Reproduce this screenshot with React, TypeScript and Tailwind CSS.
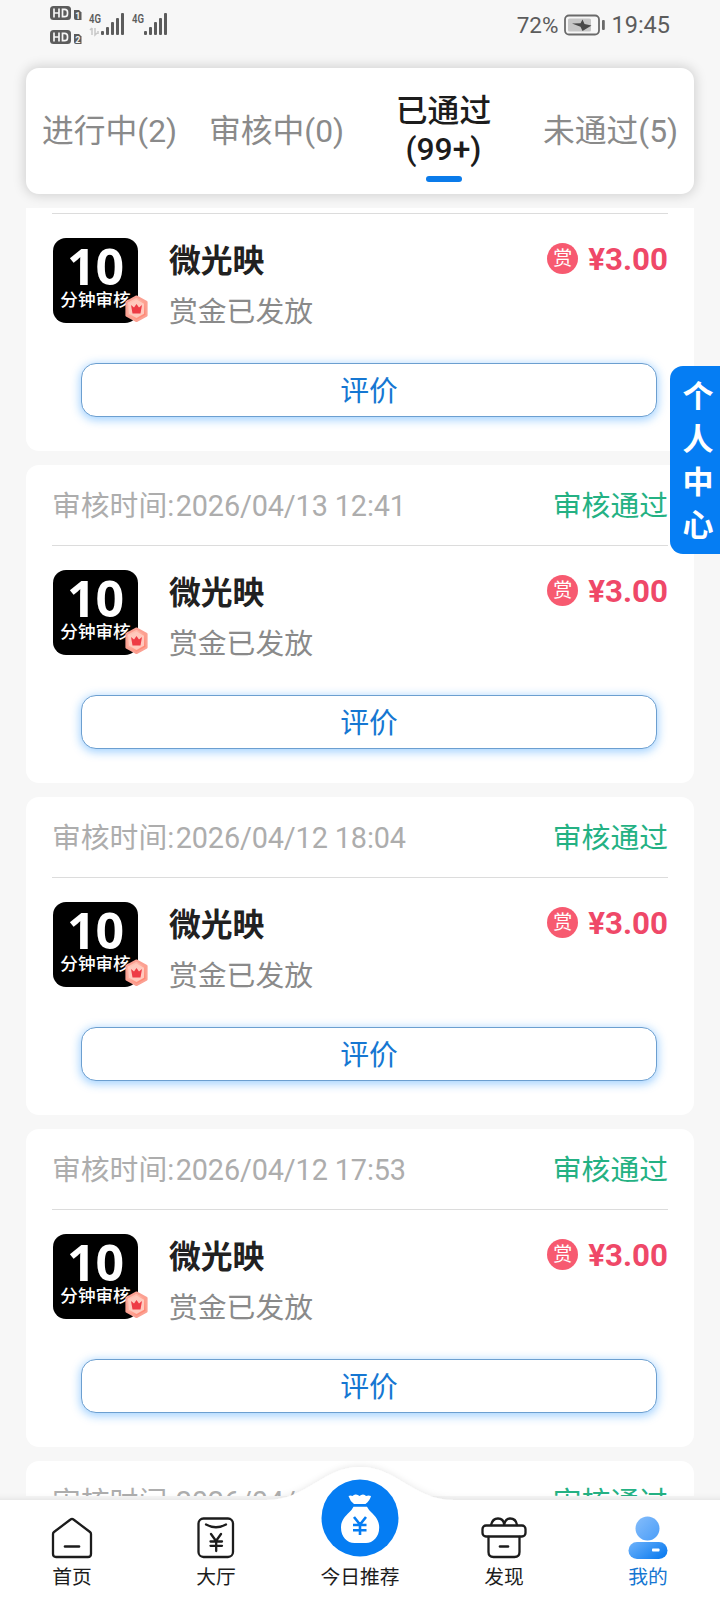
import React from "react";

const times = ["2026/04/13 12:41", "2026/04/12 18:04", "2026/04/12 17:53"];

function SignalBars({ children }: { children?: React.ReactNode }) {
  return (
    <svg className="overflow-visible" width="36" height="24" viewBox="0 0 36 24" fill="#5c5c5c">
      <text x="0" y="10" fontSize="12.500" fontWeight="600" textLength="12" lengthAdjust="spacingAndGlyphs">4G</text>
      <rect x="12" y="18" width="3" height="4" rx="1" />
      <rect x="17" y="14" width="3" height="8" rx="1" />
      <rect x="22" y="9" width="3" height="13" rx="1" />
      <rect x="27" y="5" width="3" height="17" rx="1" />
      <rect x="32" y="0" width="3" height="22" rx="1" />
      {children}
    </svg>
  );
}

function HdMark({ n }: { n: string }) {
  return (
    <svg width="32" height="14" viewBox="0 0 32 14">
      <rect x="0" y="0" width="21" height="14" rx="3.500" fill="#5c5c5c" />
      <path d="M4 2.500v9M4 7h5M9 2.500v9M12.500 3.300v7.400h2q3 0 3-2.700V6q0-2.700-3-2.700Z" fill="none" stroke="#f6f6f6" strokeWidth="1.700" />
      <path d="M24 4h5l2.500 2.500V14h-5.500q-2 0-2-2Z" fill="#5c5c5c" />
      <text x="25.200" y="12.500" fontSize="9" fontWeight="700" fill="#f6f6f6">{n}</text>
    </svg>
  );
}

function StatusBar() {
  return (
    <div className="flex h-[68px] shrink-0 items-start justify-between pl-[50px] pr-[50px] text-[#5c5c5c]">
      <div className="flex pt-1.5">
        <div className="flex flex-col gap-2.5">
          <HdMark n="1" />
          <HdMark n="2" />
        </div>
        <div className="flex gap-[7px] pl-[7px] pt-[7px]">
          <SignalBars>
            <path d="M3 15v7M3 15l-2 2M6 15v7l2-2M9 18v3" fill="none" stroke="#c8c8c8" strokeWidth="1.500" />
          </SignalBars>
          <SignalBars />
        </div>
      </div>
      <div className="flex h-[50px] items-center text-[23.500px] leading-none">
        <span className="text-[22.500px]">72%</span>
        <svg className="-mt-px ml-[6px] mr-[6px]" width="41" height="22" viewBox="0 0 41 22">
          <rect x="1" y="1.500" width="34" height="19" rx="4" fill="none" stroke="#6a6a6a" strokeWidth="1.800" />
          <rect x="4" y="4.500" width="23" height="13" rx="1.500" fill="#c6c6c6" />
          <path d="M8 9.500 16.500 9.200 18.500 5.500 20.500 10 27.500 11.500 18.500 17 16.500 12.800Z" fill="#484848" />
          <rect x="38" y="6" width="2.800" height="10" rx="1" fill="#6a6a6a" />
        </svg>
        <span className="pt-px">19:45</span>
      </div>
    </div>
  );
}

function Tabs() {
  return (
    <div className="relative z-10 mx-[26px] flex h-[126px] shrink-0 items-center rounded-[13px] bg-white text-[31.800px] leading-[38px] text-[#8a8a8a] shadow-[0_0_12px_2px_rgba(0,0,0,0.15)]">
      <div className="w-[167px] pb-px text-center">进行中(2)</div>
      <div className="w-[167px] pb-px text-center">审核中(0)</div>
      <div className="flex w-[167px] flex-col items-center pt-[12px] font-medium text-[#1c1c1c]">
        <span>已通过</span>
        <span>(99+)</span>
        <span className="mt-[8px] h-1.5 w-9 rounded-full bg-[#0a7bea]" />
      </div>
      <div className="w-[167px] pb-px text-center">未通过(5)</div>
    </div>
  );
}

function CrownBadge() {
  return (
    <svg className="absolute left-[71px] top-[56px]" width="25" height="30" viewBox="0 0 25 30">
      <defs>
        <linearGradient id="badge" x1="0" y1="0" x2="1" y2="1">
          <stop offset="0" stopColor="#ffd9cc" />
          <stop offset="1" stopColor="#ff7560" />
        </linearGradient>
      </defs>
      <path d="M12.500 2.500 22.500 8v13.500L12.500 27 2.500 21.500V8Z" fill="url(#badge)" stroke="#fba092" strokeWidth="2.200" strokeLinejoin="round" />
      <path d="M12.500 5.500 20 9.700v10L12.500 24 5 19.700v-10Z" fill="#ffc9bd" />
      <path d="M7 11l3 2.500 2.500-3.500 2.500 3.500 3-2.500-1.500 8.500h-8Z" fill="#ee3b45" />
    </svg>
  );
}

function CardHeader({ time }: { time: string }) {
  return (
    <div className="flex h-20 items-center justify-between pt-[3px] text-[28.800px] leading-none">
      <span className="text-[#adadad]">
        审核时间<span className="mr-[1.500px]">:</span>
        <span className="tracking-[-0.120px]">{time}</span>
      </span>
      <span className="text-[#24b183]">审核通过</span>
    </div>
  );
}

function CardBody() {
  return (
    <>
      <div className="h-px bg-[#dcdcdc]" />
      <div className="flex pt-6">
        <div className="relative ml-px size-[85px] rounded-[13px] bg-black text-center text-white">
          <div className="pt-[8px] font-['Open_Sans'] text-[50px] font-bold leading-[40px]">10</div>
          <div className="whitespace-nowrap pt-[3px] text-[17.600px] font-medium leading-[22px]">分钟审核</div>
          <CrownBadge />
        </div>
        <div className="flex flex-col pl-[31px]">
          <span className="pt-[5px] text-[31.800px] font-bold leading-[36px] text-[#212121]">微光映</span>
          <span className="pt-[15px] text-[28.800px] leading-[36px] text-[#8a8a8a]">赏金已发放</span>
        </div>
        <div className="ml-auto flex h-[42px] items-center gap-2.5">
          <span className="-mt-px flex size-[31px] items-center justify-center rounded-full bg-[#f75a70] text-[19px] leading-none text-white">赏</span>
          <span className="pt-[2px] text-[31.300px] font-bold leading-none text-[#ef4868]">¥3.00</span>
        </div>
      </div>
      <div className="mt-auto pb-[34px] pl-[29px] pr-[11px]">
        <button className="flex h-[54px] w-full items-center justify-center rounded-[15px] border border-[#6c9fd0] bg-white pt-[3px] text-[28.800px] leading-none text-[#1677d2] shadow-[0_2px_10px_1px_rgba(20,140,255,0.4)]">
          评价
        </button>
      </div>
    </>
  );
}

function HomeIcon() {
  return (
    <svg width="44" height="44" viewBox="0 0 44 44" fill="none" stroke="#1c1c1c" strokeWidth="2.300" strokeLinejoin="round" strokeLinecap="round">
      <path d="M20.500 3.500Q22 2.300 23.500 3.500L40 16q1 .8 1 2v20q0 3-3 3H6q-3 0-3-3V18q0-1.200 1-2Z" />
      <path d="M15 30.500h14" strokeWidth="2.600" />
    </svg>
  );
}

function HallIcon() {
  return (
    <svg width="44" height="44" viewBox="0 0 44 44" fill="none" stroke="#1c1c1c" strokeWidth="2.300" strokeLinecap="round" strokeLinejoin="round">
      <rect x="4.500" y="2.500" width="34.500" height="38.500" rx="5" />
      <path d="M12 8.500q10 5.500 20 0M17 18l5 7 5-7M16.500 25.500h11.500M16.500 29.800h11.500M22.200 25v10" />
    </svg>
  );
}

function GiftIcon() {
  return (
    <svg width="46" height="44" viewBox="0 0 46 44" fill="none" stroke="#1c1c1c" strokeWidth="2.300" strokeLinecap="round" strokeLinejoin="round">
      <rect x="1.500" y="9.500" width="43" height="11" rx="3.500" />
      <path d="M7.500 21v15q0 5 5 5h21q5 0 5-5V21" />
      <path d="M10 9q1.500-6.500 7-6.500 5.500 0 6.200 6Q24.500 2.500 29 2.500q6 0 7 6.500" />
      <path d="M19 30.500h8" strokeWidth="2.600" />
    </svg>
  );
}

function UserIcon() {
  return (
    <svg width="44" height="44" viewBox="0 0 44 44">
      <defs>
        <linearGradient id="head" x1="0" y1="0" x2="1" y2="1">
          <stop offset="0" stopColor="#85bdfb" />
          <stop offset="1" stopColor="#4a9df8" />
        </linearGradient>
        <linearGradient id="body" x1="0" y1="0" x2="1" y2="0.600">
          <stop offset="0" stopColor="#6fb3fb" />
          <stop offset="1" stopColor="#127ff0" />
        </linearGradient>
      </defs>
      <circle cx="21.500" cy="12.500" r="12" fill="url(#head)" />
      <rect x="2.500" y="26" width="39" height="17" rx="8.500" fill="url(#body)" />
      <rect x="26" y="32.500" width="7.500" height="3" rx="0.800" fill="#fff" />
    </svg>
  );
}

function BagIcon() {
  return (
    <svg className="mb-[3px]" width="78" height="78" viewBox="0 0 78 78">
      <circle cx="39" cy="39" r="38.500" fill="#057df3" />
      <path d="M27.500 17q2-1 4 0 1.500-1.800 3.500-1.500 2 .3 3.500 1.500 1.500-1.500 3.500-1.500 2 .2 3 1.500 2.500-1 5 0-1 4.500-5.500 8H33q-4-3-5.500-8Z" fill="#fff" />
      <path d="M32.500 27.800h13.500q1.500 3 4 5.200c5.500 5 8.200 9.500 8.200 15.500C58.200 58 52 64 45 64H33.500C26 64 20 58 20 48.500c0-6 3-10.500 8.500-15.500q2.500-2.200 4-5.200Z" fill="#fff" />
      <path d="M33 38l6 7.500 6-7.500M32 46h13.500M32 51.200h13.500M39 45.500V56" fill="none" stroke="#057df3" strokeWidth="2.600" />
    </svg>
  );
}

function NavItem({ label, children, active }: { label: string; children: React.ReactNode; active?: boolean }) {
  return (
    <div className={active ? "flex w-[144px] flex-col items-center justify-end text-[#1677d2]" : "flex w-[144px] flex-col items-center justify-end text-[#1c1c1c]"}>
      {children}
      <span className="mt-[5px] h-[35px] text-[19.800px] leading-[26px]">{label}</span>
    </div>
  );
}

function BottomNav() {
  return (
    <div className="relative z-10 flex h-[104px] shrink-0 items-end">
      <svg className="absolute bottom-0 left-0" width="720" height="144" viewBox="0 0 720 144">
        <defs>
          <filter id="navShadow" x="-5%" y="-20%" width="110%" height="140%">
            <feDropShadow dx="0" dy="-1" stdDeviation="3" floodColor="#000" floodOpacity="0.090" />
          </filter>
        </defs>
        <path d="M-10 44H266C308 44 322 11 360 11S412 44 454 44H730V160H-10Z" fill="#fff" filter="url(#navShadow)" />
      </svg>
      <div className="relative flex items-end">
        <NavItem label="首页"><HomeIcon /></NavItem>
        <NavItem label="大厅"><HallIcon /></NavItem>
        <NavItem label="今日推荐"><BagIcon /></NavItem>
        <NavItem label="发现"><GiftIcon /></NavItem>
        <NavItem label="我的" active><UserIcon /></NavItem>
      </div>
    </div>
  );
}

export default function App() {
  return (
    <div className="relative flex h-[1600px] w-[720px] flex-col overflow-hidden bg-[#f7f7f7] font-[Roboto,'Noto_Sans_CJK_SC',sans-serif]">
      <StatusBar />
      <Tabs />
      <div className="mt-[14px] flex h-[1288px] shrink-0 flex-col gap-[14px] overflow-hidden px-[26px]">
        <div className="flex h-[243px] shrink-0 flex-col rounded-b-[13px] bg-white px-[26px] pt-[5px]">
          <CardBody />
        </div>
        {times.map((time) => (
          <div key={time} className="flex h-[318px] shrink-0 flex-col rounded-[13px] bg-white px-[26px]">
            <CardHeader time={time} />
            <CardBody />
          </div>
        ))}
        <div className="shrink-0 rounded-t-[13px] bg-white px-[26px]">
          <CardHeader time="2026/04/12 17:40" />
        </div>
      </div>
      <BottomNav />
      <div className="absolute right-0 top-[366px] z-20 flex h-[188px] w-[50px] flex-col items-center justify-center rounded-l-[13px] bg-[#057df3] pl-[6px] pt-[2px] text-[31px] font-bold leading-[43px] text-white">
        <span>个</span>
        <span>人</span>
        <span>中</span>
        <span>心</span>
      </div>
    </div>
  );
}
